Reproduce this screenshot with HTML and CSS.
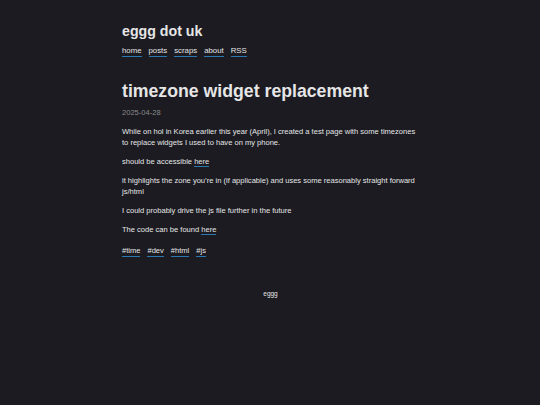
FILE: index.html
```html
<!DOCTYPE html>
<html>
<head>
<meta charset="utf-8">
<link rel="stylesheet" href="styles.css">
</head>
<body>
<div class="wrap">
  <header class="site">
    <div class="site-title">eggg dot uk</div>
    <nav class="nav">
      <a href="#">home</a>
      <a href="#">posts</a>
      <a href="#">scraps</a>
      <a href="#">about</a>
      <a href="#">RSS</a>
    </nav>
  </header>
  <main class="post">
    <h1 class="post-title">timezone widget replacement</h1>
    <div class="date">2025-04-28</div>
    <p>While on hol in Korea earlier this year (April), I created a test page with some timezones to replace widgets I used to have on my phone.</p>
    <p>should be accessible <a href="#">here</a></p>
    <p>it highlights the zone you’re in (if applicable) and uses some reasonably straight forward js/html</p>
    <p>I could probably drive the js file further in the future</p>
    <p>The code can be found <a href="#">here</a></p>
    <div class="tags">
      <a href="#">#time</a>
      <a href="#">#dev</a>
      <a href="#">#html</a>
      <a href="#">#js</a>
    </div>
  </main>
  <footer class="foot">eggg</footer>
</div>
</body>
</html>
```
FILE: styles.css
```css
html, body {
  margin: 0;
  padding: 0;
  background: #1b1b21;
}
body {
  font-family: "Liberation Sans", Arial, sans-serif;
  color: #e6e6e6;
  font-size: 7.55px;
  line-height: 11px;
}
.wrap {
  width: 297px;
  margin: 0 auto;
  padding: 22px 0 0 1px;
}
.site-title {
  font-size: 14.2px;
  font-weight: bold;
  line-height: 18px;
}
.nav {
  display: flex;
  gap: 7px;
  margin-top: 5px;
  font-size: 7.8px;
}
a {
  color: #e6e6e6;
  text-decoration: none;
  border-bottom: 1px solid #2a78b0;
}
.post-title {
  font-size: 17.7px;
  line-height: 22px;
  font-weight: bold;
  margin: 23px 0 0;
}
.date {
  color: #8a8a8e;
  margin-top: 5px;
}
.post p {
  margin: 8px 0 0;
}
.tags {
  display: flex;
  gap: 7px;
  margin-top: 10px;
}
.foot {
  text-align: center;
  font-size: 6.5px;
  margin-top: 31px;
}
```
